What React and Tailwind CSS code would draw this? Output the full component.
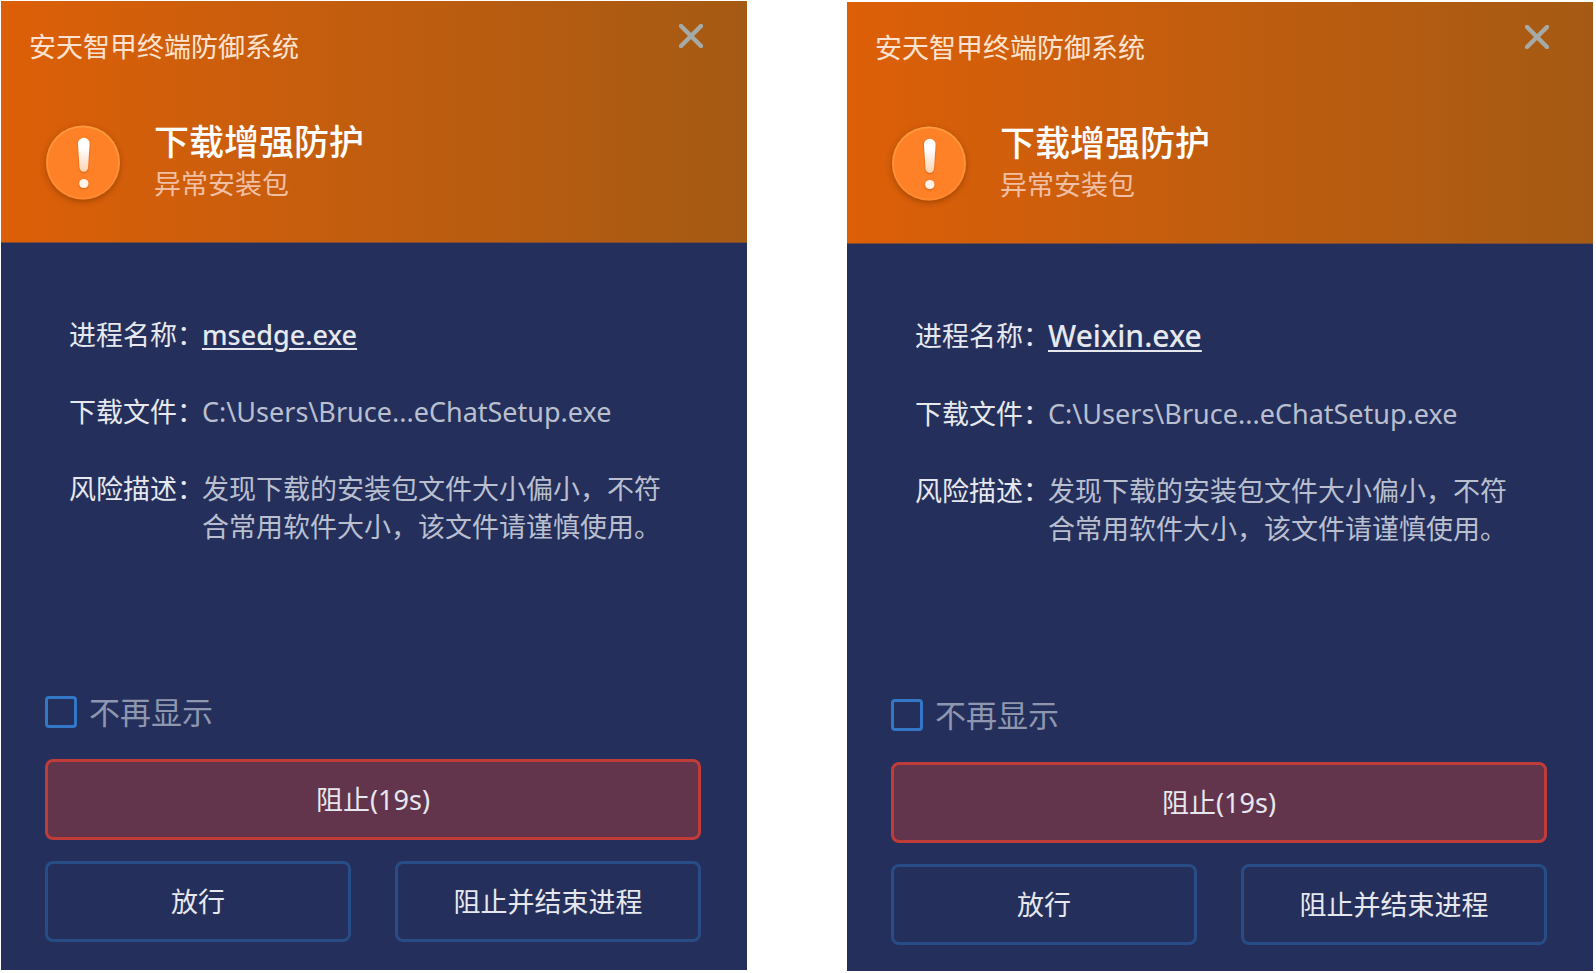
import React, { useState } from 'react';

const alerts = [
  {
    id: 'msedge',
    process: 'msedge.exe',
    file: 'C:\\Users\\Bruce...eChatSetup.exe',
    panelClass: '',
    footerClass: 'pb-7',
    linkClass: 'font-medium',
  },
  {
    id: 'weixin',
    process: 'Weixin.exe',
    file: 'C:\\Users\\Bruce...eChatSetup.exe',
    panelClass: 'mt-px',
    footerClass: 'pb-[26px]',
    linkClass: 'text-[30px] font-medium',
  },
];

const WarningIcon = ({ id }) => (
  <svg className="w-[90px] h-[90px] flex-shrink-0" viewBox="0 0 90 90" aria-hidden="true">
    <defs>
      <linearGradient id={`${id}-rim`} x1="0" y1="0" x2="0" y2="1">
        <stop offset="0" stopColor="#ff9a3c" />
        <stop offset="1" stopColor="#ff8a30" />
      </linearGradient>
      <linearGradient id={`${id}-mark`} x1="0" y1="0" x2="0" y2="1">
        <stop offset="0.3" stopColor="#ffffff" />
        <stop offset="1" stopColor="#ffd3b4" />
      </linearGradient>
      <filter id={`${id}-shadow`} x="-20%" y="-20%" width="140%" height="140%">
        <feDropShadow dx="0" dy="2" stdDeviation="3" floodColor="#7a3300" floodOpacity="0.6" />
      </filter>
      <filter id={`${id}-mark-shadow`} x="-50%" y="-20%" width="200%" height="150%">
        <feDropShadow dx="0" dy="1" stdDeviation="1" floodColor="#a84800" floodOpacity="0.6" />
      </filter>
    </defs>
    <circle cx="45" cy="45.5" r="37" fill={`url(#${id}-rim)`} filter={`url(#${id}-shadow)`} />
    <circle cx="45" cy="45.5" r="35.2" fill="#ff8127" />
    <g filter={`url(#${id}-mark-shadow)`}>
      <path
        d="M40 26.5a5.8 5.8 0 0 1 11.6 0L50 50.5a4.2 4.2 0 0 1-8.4 0Z"
        fill={`url(#${id}-mark)`}
      />
      <circle cx="45.8" cy="66.5" r="4.6" fill="#fff3ea" />
    </g>
  </svg>
);

const Row = ({ label, children }) => (
  <div className="flex">
    <dt className="w-[133px] flex-shrink-0 whitespace-nowrap text-[#e6e8ee]">{label}</dt>
    <dd className="flex-1 text-[#b9bfcf]">{children}</dd>
  </div>
);

const AlertWindow = ({ id, process, file, panelClass, footerClass, linkClass }) => {
  const [muted, setMuted] = useState(false);

  return (
    <section
      className={`${panelClass} flex flex-col min-h-[969px] bg-[#24305b] text-[27px] leading-[38px]`}
    >
      <header className="min-h-[242px] bg-linear-to-r from-[#dd5f07] to-[#a55a13] border-b border-[#7c4a35]">
        <div className="flex items-start justify-between pl-7 pr-11 pt-[23px]">
          <h1 className="pt-1 text-[#ffe3d0]">安天智甲终端防御系统</h1>
          <button type="button" aria-label="关闭" className="text-[#a5aaa6]">
            <svg className="w-6 h-6" viewBox="0 0 24 24" fill="none" aria-hidden="true">
              <path
                d="M2 2 22 22M22 2 2 22"
                stroke="currentColor"
                strokeWidth="4.4"
                strokeLinecap="round"
              />
            </svg>
          </button>
        </div>
        <div className="flex items-center gap-[26px] pl-[37px] pt-[51px]">
          <WarningIcon id={id} />
          <div className="pb-0.5">
            <h2 className="text-[35px] leading-[46px] font-medium text-white">下载增强防护</h2>
            <p className="text-[#f1bfa3]">异常安装包</p>
          </div>
        </div>
      </header>

      <dl className="flex flex-col gap-[39px] pl-[68px] pr-[80px] pt-[73px]">
        <Row label="进程名称：">
          <a
            href={`#${id}`}
            className={`${linkClass} text-[#e6e8ee] underline underline-offset-3 decoration-2`}
          >
            {process}
          </a>
        </Row>
        <Row label="下载文件：">{file}</Row>
        <Row label="风险描述：">发现下载的安装包文件大小偏小，不符合常用软件大小，该文件请谨慎使用。</Row>
      </dl>

      <footer className={`${footerClass} mt-auto pl-11 pr-[46px]`}>
        <label className="inline-flex items-center gap-3 text-[31px] leading-10 text-[#8f97b0]">
          <input
            type="checkbox"
            checked={muted}
            onChange={(e) => setMuted(e.target.checked)}
            className="appearance-none w-8 h-8 rounded border-3 border-[#3377c6] checked:bg-[#3377c6]"
          />
          不再显示
        </label>
        <div className="grid grid-cols-2 gap-x-11 gap-y-[21px] pt-[22px] text-[#e6e8ee]">
          <button
            type="button"
            className="col-span-2 h-[81px] rounded-lg border-3 border-[#c03c39] bg-[#63354d]"
          >
            阻止(19s)
          </button>
          <button type="button" className="h-[81px] rounded-lg border-3 border-[#284c85]">
            放行
          </button>
          <button type="button" className="h-[81px] rounded-lg border-3 border-[#284c85]">
            阻止并结束进程
          </button>
        </div>
      </footer>
    </section>
  );
};

const App = () => (
  <main className="grid grid-cols-2 items-start gap-[100px] pl-px pr-[3px] pt-px bg-white font-['Noto_Sans','Noto_Sans_CJK_SC',sans-serif]">
    {alerts.map((alert) => (
      <AlertWindow key={alert.id} {...alert} />
    ))}
  </main>
);

export default App;
